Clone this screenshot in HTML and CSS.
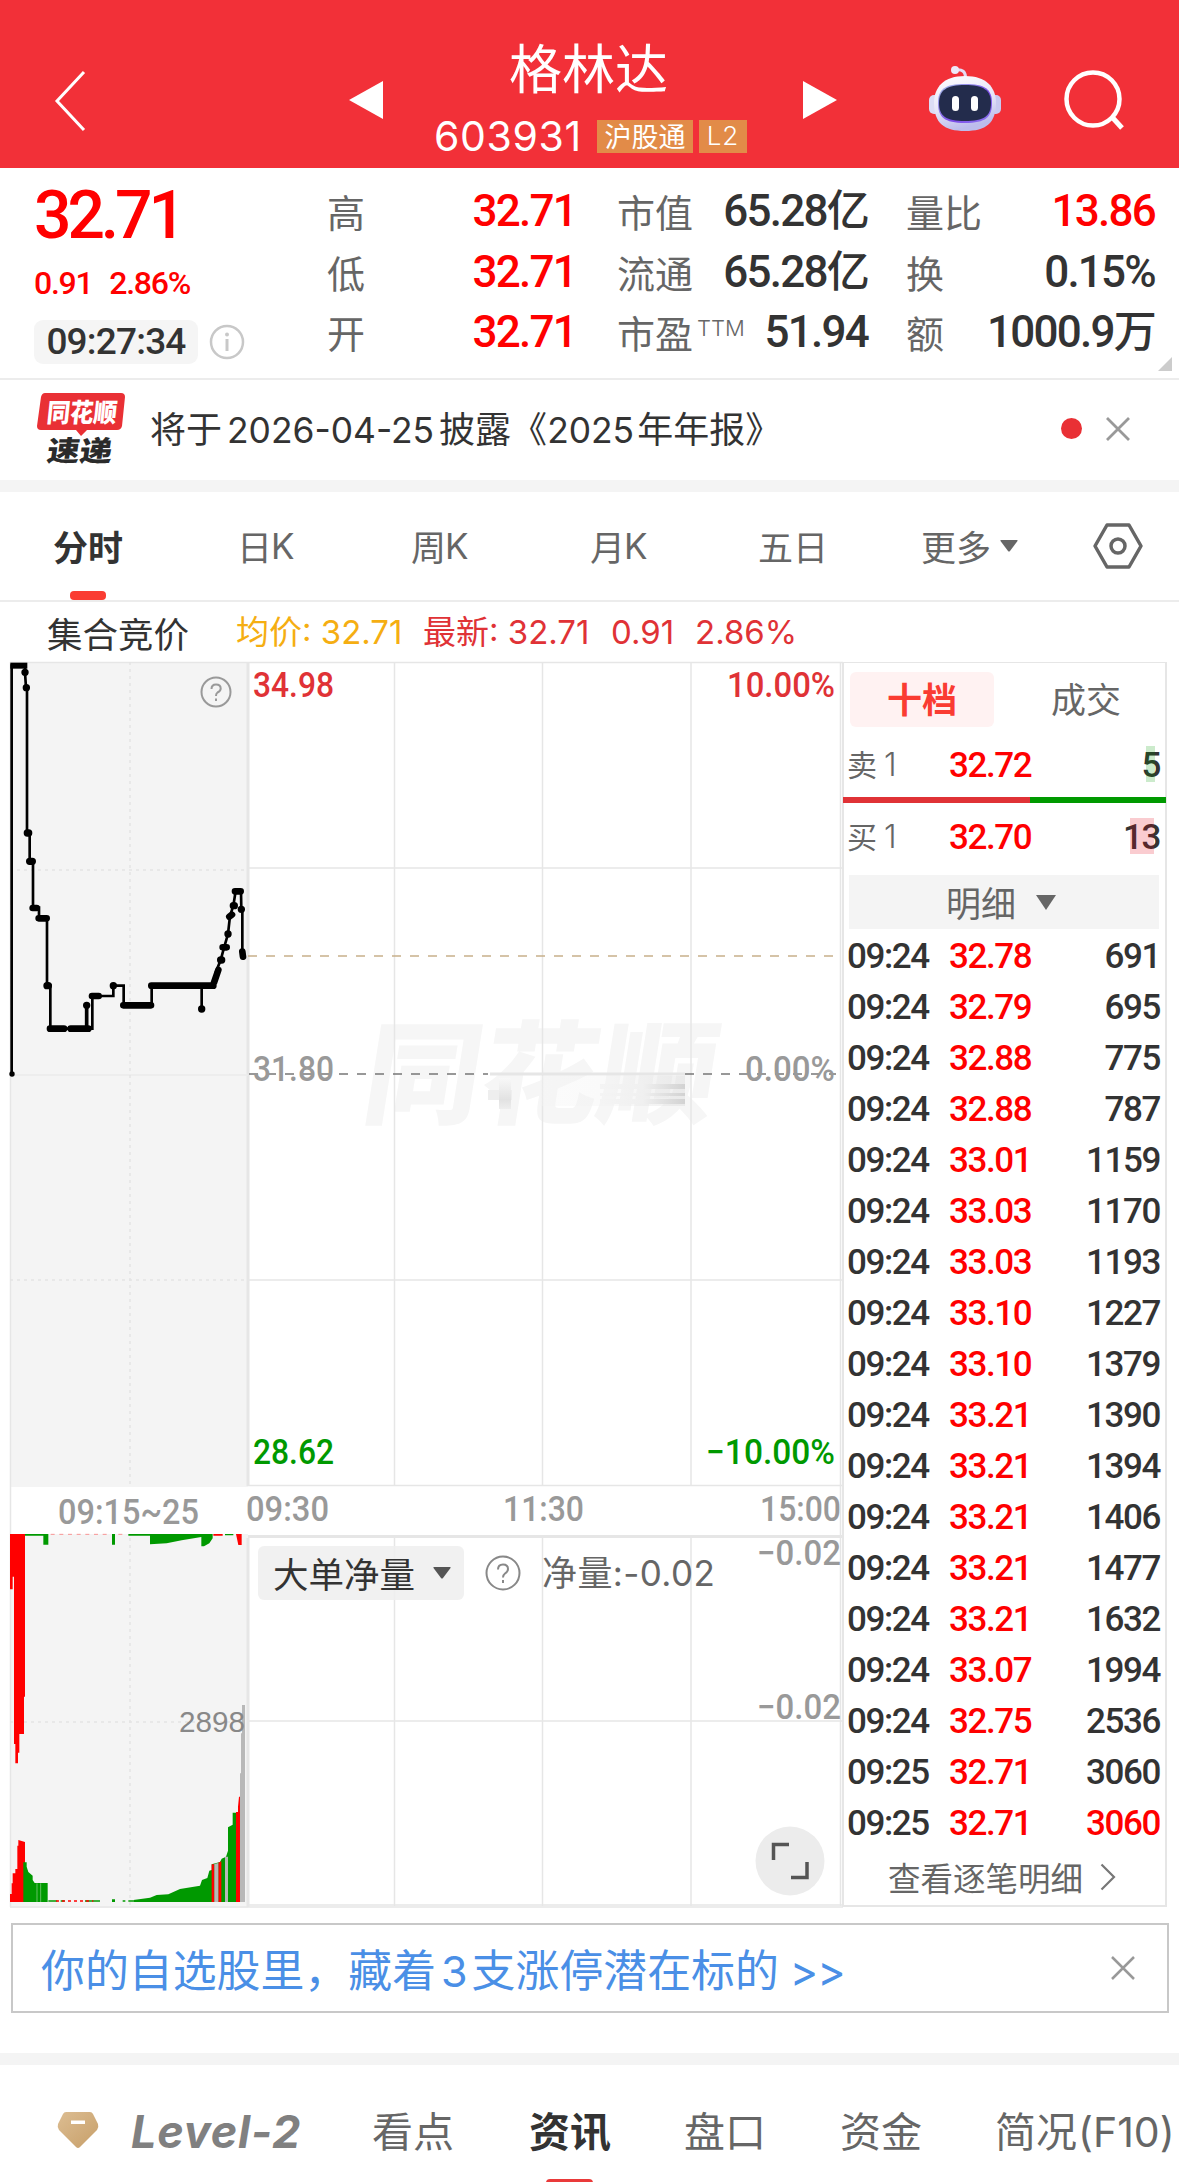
FILE: index.html
```html
<!DOCTYPE html>
<html lang="zh-CN">
<head>
    <meta charset="UTF-8">
    <meta name="viewport" content="width=device-width, initial-scale=1.0">
    <title>格林达 603931</title>
    <link rel="stylesheet" href="styles.css">
</head>
<body>
    <header class="header">
        <svg class="back" viewBox="0 0 32 60"><path d="M30 1 L3 30 L30 59" fill="none" stroke="#fff" stroke-width="3"/></svg>
        <svg class="prev" viewBox="0 0 34 38"><path d="M34 0 V38 L0 19z" fill="#fff"/></svg>
        <div class="stock">
            <h1>格林达</h1>
            <div class="code"><span class="code-num">603931</span><span class="badge">沪股通</span><span class="badge l2">L2</span></div>
        </div>
        <svg class="next" viewBox="0 0 34 38"><path d="M0 0 V38 L34 19z" fill="#fff"/></svg>
        <svg class="robot" viewBox="0 0 72 66">
            <defs>
                <linearGradient id="shell" x1="0" y1="0" x2="0.3" y2="1">
                    <stop offset="0" stop-color="#ffffff"/>
                    <stop offset="0.6" stop-color="#e6e4f8"/>
                    <stop offset="1" stop-color="#bcbcec"/>
                </linearGradient>
                <linearGradient id="rim" x1="0" y1="0" x2="1" y2="1">
                    <stop offset="0" stop-color="#a9c4e8"/>
                    <stop offset="0.6" stop-color="#7b4be8"/>
                    <stop offset="1" stop-color="#8f7cf0"/>
                </linearGradient>
            </defs>
            <path d="M26 4 Q37 2 36.500 13" fill="none" stroke="#e4dcf4" stroke-width="3"/>
            <circle cx="26" cy="4" r="4" fill="#eee9f8"/>
            <rect x="0" y="29" width="11" height="19" rx="5" fill="#dcdcf5"/>
            <rect x="61" y="29" width="11" height="19" rx="5" fill="#c9c9f0"/>
            <path d="M36 10 C57 10 67 21 67 37 C67 57 57 65 36 65 C15 65 5 57 5 37 C5 21 15 10 36 10z" fill="url(#shell)"/>
            <path d="M36 18 C56 18 63 23 63 37 C63 51 57 57 36 57 C15 57 9 51 9 37 C9 23 16 18 36 18z" fill="url(#rim)"/>
            <path d="M36 19 C54 19 62 24 62 37 C62 50 55 55 36 55 C17 55 10 50 10 37 C10 24 18 19 36 19z" fill="#232c4c"/>
            <rect x="23" y="30" width="7" height="15" rx="3.500" fill="#fff"/>
            <rect x="42" y="30" width="7" height="15" rx="3.500" fill="#fff"/>
        </svg>
        <svg class="search" viewBox="0 0 60 60"><circle cx="29" cy="29" r="26.500" fill="none" stroke="#fff" stroke-width="4.500"/><path d="M48 47 L58 58" stroke="#fff" stroke-width="5"/></svg>
    </header>

    <section class="quote">
        <div class="now">
            <div class="price num">32.71</div>
            <div class="change num"><span>0.91</span><span>2.86%</span></div>
            <div class="clock">
                <span class="time num">09:27:34</span>
                <svg class="info" viewBox="0 0 36 36"><circle cx="18" cy="18" r="16" fill="none" stroke="#c8c8c8" stroke-width="2.500"/><circle cx="18" cy="10.500" r="2" fill="#c8c8c8"/><path d="M18 15 V27" stroke="#c8c8c8" stroke-width="3"/></svg>
            </div>
        </div>
        <dl class="stats">
            <dt>高</dt><dd class="up num">32.71</dd>
            <dt>低</dt><dd class="up num">32.71</dd>
            <dt>开</dt><dd class="up num">32.71</dd>
        </dl>
        <dl class="stats">
            <dt>市值</dt><dd class="num">65.28<i>亿</i></dd>
            <dt>流通</dt><dd class="num">65.28<i>亿</i></dd>
            <dt>市盈<sup>TTM</sup></dt><dd class="num">51.94</dd>
        </dl>
        <dl class="stats">
            <dt>量比</dt><dd class="up num">13.86</dd>
            <dt>换</dt><dd class="num">0.15%</dd>
            <dt>额</dt><dd class="num">1000.9<i>万</i></dd>
        </dl>
        <svg class="corner" viewBox="0 0 14 14"><path d="M14 0 V14 H0z" fill="#ccc"/></svg>
    </section>

    <section class="news">
        <svg class="express" viewBox="0 0 90 72">
            <path d="M8 0 H84 Q88 0 88 4 L85 33 Q84 37 80 37 H50 L44 43 L39 37 H4 Q0 37 0 33 L4 4 Q5 0 8 0z" fill="#e93035"/>
            <text class="logo-text" transform="translate(9 29) skewX(-6)" font-size="26" textLength="70" lengthAdjust="spacingAndGlyphs" fill="#fff">同花顺</text>
            <text class="logo-text" transform="translate(9 68) skewX(-8)" font-size="28" textLength="65" lengthAdjust="spacingAndGlyphs" fill="#2b2b2b">速递</text>
        </svg>
        <p class="news-text">将于<b>2026-04-25</b>披露《<b class="yr">2025</b>年年报》</p>
        <span class="dot"></span>
        <svg class="close" viewBox="0 0 24 24"><path d="M1 1 L23 23 M23 1 L1 23" stroke="#999" stroke-width="2.800"/></svg>
    </section>

    <nav class="periods">
        <a class="active">分时</a>
        <a>日<span class="k">K</span></a>
        <a>周<span class="k">K</span></a>
        <a>月<span class="k">K</span></a>
        <a>五日</a>
        <a>更多<svg class="caret" viewBox="0 0 18 12"><path d="M1 0 H17 Q18 0 17.500 1 L10 11 Q9 12 8 11 L0.500 1 Q0 0 1 0z" fill="#666"/></svg></a>
        <svg class="gear" viewBox="0 0 50 46"><path d="M14 2 H36 L48 23 L36 44 H14 L2 23z" fill="none" stroke="#666" stroke-width="3.500" stroke-linejoin="round"/><circle cx="25" cy="23" r="7" fill="none" stroke="#666" stroke-width="3.500"/></svg>
    </nav>

    <div class="legend">
        <span class="phase">集合竞价</span>
        <span class="avg">均价: 32.71</span>
        <span class="last">最新: 32.71</span>
        <span class="last">0.91</span>
        <span class="last">2.86%</span>
    </div>

    <main class="board">
        <div class="charts">
            <svg class="chart" viewBox="0 662 843 1248">
                <!-- auction background -->
                <rect x="10" y="662" width="238" height="825" fill="#f4f4f4"/>
                <rect x="10" y="1534" width="238" height="374" fill="#f4f4f4"/>
                <text class="mark" transform="translate(359 1115) skewX(-9)" font-size="112" textLength="352" lengthAdjust="spacingAndGlyphs">同花顺</text>

                <!-- grid -->
                <g fill="none" stroke="#e6e6e6" stroke-width="1.500">
                    <path d="M10 662.500 H843 M248 868 H843 M248 1280 H843 M248 1485.500 H843 M248 1721 H843 M10 1907 H843 M248 1905 H843"/>
                    <path d="M394.500 662 V1485 M542.500 662 V1485 M691 662 V1485 M394.500 1538 V1906 M542.500 1538 V1906 M691 1538 V1906 M840.500 662 V1906 M10.500 662 V1907"/>
                    <path d="M248 662 V1486 M248 1538 V1907 M248 1536.500 H843" stroke-width="3"/>
                    <path d="M10 1075 H248" stroke="#ebebeb"/>
                    <path d="M130 662 V1486 M130 1538 V1906 M10 870 H248 M10 1280 H248 M10 1722 H248" stroke="#e4e4e4" stroke-dasharray="3 4"/>
                </g>
                <defs>
                    <linearGradient id="haze" x1="0" y1="0" x2="1" y2="0">
                        <stop offset="0" stop-color="#f4f4f4"/>
                        <stop offset="0.5" stop-color="#f0f0f0"/>
                        <stop offset="1" stop-color="#d2d2d2"/>
                    </linearGradient>
                    <linearGradient id="smudge" x1="0" y1="0" x2="0" y2="1">
                        <stop offset="0" stop-color="#f8f8f8"/>
                        <stop offset="0.7" stop-color="#e2e2e2"/>
                        <stop offset="1" stop-color="#eeeeee"/>
                    </linearGradient>
                </defs>
                <path d="M248 956 H836" stroke="#c8b08a" stroke-width="1.700" stroke-dasharray="9 9"/>
                <path d="M249 1074 H488 M685 1074 H836" stroke="#777" stroke-width="1.700" stroke-dasharray="9 9"/>
                <path d="M490 1074 H685" stroke="#e6e6e6" stroke-width="3"/>
                <rect x="540" y="1076" width="145" height="30" fill="url(#haze)" opacity="0.35"/>
                <rect x="600" y="1084" width="85" height="5" fill="url(#haze)"/>
                <rect x="600" y="1093" width="85" height="3" fill="url(#haze)"/>
                <rect x="600" y="1099" width="85" height="5" fill="url(#haze)"/>
                <rect x="488" y="1090" width="24" height="10" fill="#eeeeee"/>
                <rect x="499" y="1078" width="12" height="31" fill="url(#smudge)"/>

                <!-- auction price steps -->
                <g transform="translate(0 640) scale(0.33333)" fill="none" stroke="#000">
                    <path stroke-width="8" d="M35 1302 V77 H75 V97 L78 143 H81 V579 H89 V664 H99 V803 H117 V835 H141 V1037 H151 V1166 H277 V1068 H340 V1037 H371 V1096 H455 V1037 H640 L648 995 L662 960 L673 920 L684 882 L690 828 L700 797 L707 753 H723 L724 808 H727 V935 L729 950 M605 1037 V1107"/>
                    <path stroke-width="11" d="M260 1096 V1166"/>
                    <path stroke-width="18" d="M31 77 H82"/>
                    <path stroke-width="20" stroke-linecap="round" d="M98 804 H110 M116 835 H140 M150 1166 H192 M212 1166 H265 M276 1068 H296 M370 1096 H453 M454 1037 H640 M642 1028 L655 990 M668 922 H680 M688 830 L696 824 M705 754 H722 M727 935 L729 950"/>
                    <path stroke-width="22" stroke-linecap="round" d="M75 97h.1 M79 143h.1 M82 579h4 M89 664h8 M141 1037h4 M260 1096h.1 M340 1037h.1 M605 1107h.1 M662 960h3 M684 882h.1 M700 797h3 M724 808h.1"/>
                    <path stroke-width="16" stroke-linecap="round" d="M36 1302h.1"/>
                </g>

                <!-- unmatched / matched volume -->
                <g transform="translate(0 1460) scale(0.33333)">
                    <path fill="#ff0000" d="M30 222 H75 V710 H72 V822 H58 V878 H54 V910 H46 V852 H42 V350 H38 V388 H30z M640 222 H668 V227 H640z M708 222 H725 V255 H715z"/>
                    <path fill="#009900" d="M75 222 H145 V254 H130 V227 H75z M336 222 H345 V254 H336z M385 222 H450 V227 H385z M450 222 H638 V235 L628 250 L612 259 H604 V231 L545 241 L500 250 L450 253z M675 222 H700 V226 H675z"/>
                    <path fill="none" stroke="#ff0000" stroke-width="2" stroke-dasharray="12 14" opacity="0.6" d="M152 223 H330 M355 223 H380"/>
                    <path fill="#ff0000" d="M30 1326 V1302 H35 V1270 H38 V1240 H46 V1227 H52 V1157 H55 V1140 L75 1146 V1326z"/>
                    <path fill="#009900" d="M70 1326 V1207 H80 V1220 L85 1236 L98 1247 V1260 L104 1269 H143 V1326z"/>
                    <path fill="none" stroke="#c9e6c4" stroke-width="1.500" d="M111 1270 V1326 M122 1270 V1326"/>
                    <path fill="none" stroke="#009900" stroke-width="5" d="M145 1323 H172 M182 1323 H194 M255 1323 H300 M368 1323 H376 M385 1323 H400"/>
                    <path fill="none" stroke="#ff0000" stroke-width="5" stroke-dasharray="9 9" d="M168 1323 H280"/>
                    <path fill="#009900" d="M336 1318 H345 V1326 H336z M400 1326 V1320 L450 1313 L470 1305 L505 1303 L540 1287 L600 1277 L606 1260 L622 1254 L628 1232 L635 1230 V1213 L660 1206 L665 1196 L678 1190 L684 1172 V1102 L698 1094 V1058 H708 V1326z"/>
                    <path fill="#ff0000" d="M635 1326 V1213 H643 V1326z M655 1326 V1208 L664 1204 V1326z M708 1326 V1056 H714 V1040 L717 1010 H721 V1326z"/>
                    <path fill="#b8b8b8" d="M643 1326 V1212 L655 1209 V1326z M675 1326 V1190 H684 V1326z M720 1326 V940 H723 V820 H726 V735 H735 V1326z"/>
                </g>
                <text x="179" y="1732" class="vol" textLength="66" lengthAdjust="spacingAndGlyphs">2898</text>

                <g class="axis">
                    <text x="253" y="697" textLength="81" lengthAdjust="spacingAndGlyphs" fill="#e03236">34.98</text>
                    <text x="727" y="697" textLength="108" lengthAdjust="spacingAndGlyphs" fill="#e03236">10.00%</text>
                    <text x="253" y="1081" textLength="81" lengthAdjust="spacingAndGlyphs">31.80</text>
                    <text x="745" y="1081" textLength="90" lengthAdjust="spacingAndGlyphs">0.00%</text>
                    <text x="253" y="1464" textLength="81" lengthAdjust="spacingAndGlyphs" fill="#009900">28.62</text>
                    <text x="706" y="1464" textLength="129" lengthAdjust="spacingAndGlyphs" fill="#009900">−10.00%</text>
                    <text x="58" y="1524" textLength="141" lengthAdjust="spacingAndGlyphs">09:15~25</text>
                    <text x="246" y="1521" textLength="83" lengthAdjust="spacingAndGlyphs">09:30</text>
                    <text x="503" y="1521" textLength="81" lengthAdjust="spacingAndGlyphs">11:30</text>
                    <text x="760" y="1521" textLength="81" lengthAdjust="spacingAndGlyphs">15:00</text>
                    <text x="757" y="1565" textLength="84" lengthAdjust="spacingAndGlyphs">−0.02</text>
                    <text x="757" y="1719" textLength="84" lengthAdjust="spacingAndGlyphs">−0.02</text>
                </g>
                <g fill="none" stroke="#999" stroke-width="2">
                    <circle cx="216" cy="692" r="14.500"/>
                    <path d="M211.500 689 Q211.500 684.500 216 684.500 Q220.700 684.500 220.700 688.500 Q220.700 691 217.500 692.500 Q216 693.500 216 696 M216 698.500 V701"/>
                </g>
            </svg>
            <div class="indicator">
                <span class="picker">大单净量<svg class="caret" viewBox="0 0 18 12"><path d="M1 0 H17 Q18 0 17.500 1 L10 11 Q9 12 8 11 L0.500 1 Q0 0 1 0z" fill="#555"/></svg></span>
                <svg class="help" viewBox="0 0 36 36"><g fill="none" stroke="#888" stroke-width="2"><circle cx="18" cy="18" r="16.500"/><path d="M13 14.500 Q13 9.500 18 9.500 Q23 9.500 23 14 Q23 16.500 20 18.500 Q18 20 18 22.500 M18 25 V28"/></g></svg>
                <span class="net">净量:-0.02</span>
            </div>
            <svg class="expand" viewBox="0 0 70 70"><circle cx="35" cy="35" r="34.500" fill="#ececec"/><path d="M18.500 34 V18.500 H34 M52 36 V51.500 H36" fill="none" stroke="#555" stroke-width="3.500"/></svg>
        </div>

        <aside class="depth">
            <div class="depth-tabs"><span class="on">十档</span><span>成交</span></div>
            <div class="level num"><span class="side">卖<em>1</em></span><span class="up">32.72</span><span class="qty sell">5</span></div>
            <div class="ratio"><span class="buy-part"></span><span class="sell-part"></span></div>
            <div class="level num"><span class="side">买<em>1</em></span><span class="up">32.70</span><span class="qty buy">13</span></div>
            <div class="detail-head">明细<svg viewBox="0 0 20 15"><path d="M0 0 H20 L10 15z" fill="#666"/></svg></div>
            <div class="tick num"><span>09:24</span><span class="up">32.78</span><span>691</span></div>
            <div class="tick num"><span>09:24</span><span class="up">32.79</span><span>695</span></div>
            <div class="tick num"><span>09:24</span><span class="up">32.88</span><span>775</span></div>
            <div class="tick num"><span>09:24</span><span class="up">32.88</span><span>787</span></div>
            <div class="tick num"><span>09:24</span><span class="up">33.01</span><span>1159</span></div>
            <div class="tick num"><span>09:24</span><span class="up">33.03</span><span>1170</span></div>
            <div class="tick num"><span>09:24</span><span class="up">33.03</span><span>1193</span></div>
            <div class="tick num"><span>09:24</span><span class="up">33.10</span><span>1227</span></div>
            <div class="tick num"><span>09:24</span><span class="up">33.10</span><span>1379</span></div>
            <div class="tick num"><span>09:24</span><span class="up">33.21</span><span>1390</span></div>
            <div class="tick num"><span>09:24</span><span class="up">33.21</span><span>1394</span></div>
            <div class="tick num"><span>09:24</span><span class="up">33.21</span><span>1406</span></div>
            <div class="tick num"><span>09:24</span><span class="up">33.21</span><span>1477</span></div>
            <div class="tick num"><span>09:24</span><span class="up">33.21</span><span>1632</span></div>
            <div class="tick num"><span>09:24</span><span class="up">33.07</span><span>1994</span></div>
            <div class="tick num"><span>09:24</span><span class="up">32.75</span><span>2536</span></div>
            <div class="tick num"><span>09:25</span><span class="up">32.71</span><span>3060</span></div>
            <div class="tick num"><span>09:25</span><span class="up">32.71</span><span class="up">3060</span></div>
            <div class="more">查看逐笔明细<svg viewBox="0 0 16 28"><path d="M1.500 1.500 L14 14 L1.500 26.500" fill="none" stroke="#777" stroke-width="2.200"/></svg></div>
        </aside>
    </main>

    <div class="promo">
        <span class="promo-text">你的自选股里，藏着<b>3</b>支涨停潜在标的<b class="gt">&gt;&gt;</b></span>
        <svg class="close" viewBox="0 0 24 24"><path d="M1 1 L23 23 M23 1 L1 23" stroke="#999" stroke-width="2.500"/></svg>
    </div>

    <nav class="sections">
        <svg class="gem" viewBox="0 0 42 36"><defs><linearGradient id="gold" x1="0" y1="0" x2="1" y2="1"><stop offset="0" stop-color="#dcbd92"/><stop offset="1" stop-color="#c79f69"/></linearGradient></defs><path d="M9 0 H33 Q35 0 36 2 L41 12 Q42 15 40 18 L23 35 Q21 37 19 35 L2 18 Q0 15 1 12 L6 2 Q7 0 9 0z" fill="url(#gold)"/><rect x="14" y="8.500" width="14" height="3.500" fill="#fff"/></svg>
        <a class="level2">Level-2</a>
        <a>看点</a>
        <a class="active">资讯</a>
        <a>盘口</a>
        <a>资金</a>
        <a>简况<span class="f10">(F10)</span></a>
    </nav>
</body>
</html>
```
FILE: styles.css
```css
* { box-sizing: border-box; }

body {
    margin: 0;
    width: 1179px;
    height: 2182px;
    overflow: hidden;
    background: #fff;
    color: #333;
    font-family: Inter, "Noto Sans CJK SC", sans-serif;
}

svg { display: block; flex: none; overflow: visible; }
h1, p, dl, dd { margin: 0; }
i, em { font-style: normal; }
b { font-weight: 400; }

.num {
    font-family: Roboto, "Noto Sans CJK SC", sans-serif;
    font-weight: 460;
    letter-spacing: -0.04em;
}

.up { color: #ff0000; }

/* header */
.header {
    display: flex;
    height: 168px;
    background: #f23038;
    color: #fff;
}
.back { width: 32px; height: 60px; margin: 71px 0 0 54px; }
.prev { width: 34px; height: 38px; margin: 81px 0 0 263px; }
.next { width: 34px; height: 38px; margin-top: 81px; }
.stock { width: 420px; padding: 36px 0 0 53px; }
.stock h1 {
    width: 160px;
    margin-left: 73px;
    font: 400 53px/60px "Noto Sans CJK SC", sans-serif;
    white-space: nowrap;
}
.code { display: flex; align-items: center; height: 33px; margin-top: 24px; }
.code-num { width: 163px; margin-left: -2px; padding-bottom: 2px; font-size: 41px; line-height: 48px; letter-spacing: 0.015em; font-weight: 380; }
.badge {
    width: 96px;
    height: 33px;
    background: #e28b48;
    font: 400 27px/32px "Noto Sans CJK SC", sans-serif;
    text-align: center;
    white-space: nowrap;
}
.l2 { width: 48px; margin-left: 6px; font-family: Inter, sans-serif; font-weight: 350; font-size: 26px; letter-spacing: 1px; }
.robot { width: 72px; height: 66px; margin: 66px 0 0 92px; }
.search { width: 60px; height: 60px; margin: 70px 0 0 63px; }

/* quote */
.quote {
    position: relative;
    display: grid;
    grid-template-columns: 293px 249px 292px 251px;
    height: 212px;
    padding-left: 34px;
    border-bottom: 2px solid #ececec;
}
.price { padding-top: 18px; font-size: 66px; line-height: 60px; color: #ff0000; letter-spacing: -0.062em; }
.change { display: flex; gap: 17px; margin-top: 18px; font-size: 32px; line-height: 38px; color: #ff0000; }
.clock { display: flex; align-items: center; gap: 11px; margin-top: 18px; }
.time { width: 164px; height: 44px; border-radius: 9px; background: #f5f5f5; font-size: 37px; line-height: 44px; letter-spacing: -0.022em; text-align: center; white-space: nowrap; }
.info { width: 36px; height: 36px; }
/* labels overflow their zero-width column so values keep one right edge */
.stats {
    display: grid;
    grid-template-columns: 0 1fr;
    grid-auto-rows: 60.5px;
    padding-top: 12px;
}
.stats:nth-child(3) { margin-left: 41px; }
.stats:nth-child(4) { margin-left: 38px; margin-right: -36px; }
.stats dt { font: 400 38px/62px "Noto Sans CJK SC", sans-serif; color: #666; white-space: nowrap; }
.stats sup { position: relative; top: 0; margin-left: 4px; vertical-align: top; font: 350 22px/54px Inter, sans-serif; }
.stats dd { font-size: 44px; line-height: 63px; text-align: right; white-space: nowrap; }
.stats i { font-size: 43px; }
.corner { position: absolute; right: 7px; bottom: 7px; width: 14px; height: 14px; }

/* news */
.news { display: flex; align-items: center; height: 112px; padding: 0 49px 3px 37px; border-bottom: 12px solid #f4f4f4; }
.express { width: 90px; height: 72px; }
.logo-text { font-family: "Noto Sans CJK SC", sans-serif; font-weight: 900; }
.news-text { flex: 1; margin-left: 23px; font: 400 36px/50px "Noto Sans CJK SC", sans-serif; white-space: nowrap; }
.news-text b { margin: 0 5px 0 5px; font: 400 35.400px/50px Inter, sans-serif; }
.news-text .yr { margin: 0 3px 0 0; }
.dot { width: 21px; height: 21px; margin-right: 24px; border-radius: 50%; background: #e93035; }
.close { width: 24px; height: 24px; }

/* period tabs */
.periods {
    display: grid;
    grid-template-columns: 184px 174px 179px 168px 163px 172px 50px;
    align-items: center;
    height: 110px;
    padding-left: 53px;
    border-bottom: 2px solid #ececec;
    color: #666;
    font: 400 35px/104px "Noto Sans CJK SC", sans-serif;
}
.periods a { display: flex; align-items: center; position: relative; height: 106px; }
.periods .k { font: 400 35px/104px Inter, sans-serif; margin-left: -1px; }
.periods .active { color: #333; font-weight: 700; }
.periods .active::after {
    content: "";
    position: absolute;
    left: 17px;
    bottom: -1px;
    width: 36px;
    height: 9px;
    border-radius: 4px;
    background: #fa3c32;
}
.caret { width: 18px; height: 12px; margin-left: 9px; }
.gear { width: 50px; height: 46px; }

/* legend */
.legend {
    display: grid;
    grid-template-columns: 189px 187px 188px 84px auto;
    height: 60px;
    padding-left: 47px;
    font-size: 33px;
    line-height: 60px;
    white-space: nowrap;
}
.phase { font: 400 35.500px/62px "Noto Sans CJK SC", sans-serif; }
.avg { color: #f5ae12; }
.last { color: #e03236; }

/* board */
.board { display: flex; height: 1248px; }
.charts { position: relative; width: 843px; }
.chart { width: 843px; height: 1248px; }
.axis { font: 460 35px Roboto, sans-serif; fill: #999; }
.vol { font: 29px "Liberation Sans", sans-serif; fill: #888; }
.mark { font-family: "Noto Sans CJK SC", sans-serif; font-weight: 900; fill: #f6f6f6; }
.indicator { position: absolute; left: 258px; top: 884px; display: flex; align-items: center; height: 54px; }
.picker {
    display: flex;
    align-items: center;
    width: 206px;
    height: 54px;
    padding-left: 15px;
    border-radius: 6px;
    background: rgba(238, 238, 238, 0.85);
    font: 400 35.500px/52px "Noto Sans CJK SC", sans-serif;
    white-space: nowrap;
}
.picker .caret { margin-left: 18px; }
.help { width: 36px; height: 36px; margin: 0 21px 0 21px; }
.net { color: #666; font-size: 35px; line-height: 50px; padding-bottom: 1px; letter-spacing: 0.4px; white-space: nowrap; }
.expand { position: absolute; left: 755px; top: 1164px; width: 70px; height: 70px; }

.depth {
    width: 325px;
    height: 1245px;
    margin-left: -1px;
    border: 2px solid #e6e6e6;
    border-top-width: 1px;
    font-size: 35px;
}
.depth-tabs { display: flex; padding: 9px 6px 0; }
.depth-tabs span { width: 144px; height: 55px; border-radius: 6px; font: 400 35px/51px "Noto Sans CJK SC", sans-serif; text-align: center; color: #666; }
.depth-tabs span + span { margin-left: 20px; }
.depth-tabs .on { background: #fff2f2; color: #fa3c32; font-weight: 700; }
.level, .tick { display: grid; grid-template-columns: 102px 100px 1fr; padding: 0 5px 0 3px; line-height: 53px; }
.level { height: 51px; }
.level:nth-child(2) { margin-top: 12px; }
.level:nth-child(4) { margin-top: 8px; }
.tick { height: 51px; }
.tick span:last-child, .qty { text-align: right; }
.level .side { font: 400 30px/49px "Noto Sans CJK SC", sans-serif; color: #666; letter-spacing: 0; }
.side em { margin-left: 7px; font: 350 32px Inter, sans-serif; }
.qty { position: relative; }
.qty::before { content: ""; position: absolute; top: 7px; right: 5px; width: 9px; height: 36px; background: #009900; opacity: 0.2; }
.qty.buy::before { right: 6px; width: 24px; background: #e60012; }
.ratio { display: flex; height: 6px; margin: 7px -1px 0 -1px; }
.buy-part { width: 187px; background: #e03236; }
.sell-part { flex: 1; background: #009900; }
.detail-head {
    display: flex;
    align-items: center;
    justify-content: center;
    gap: 20px;
    height: 54px;
    margin: 13px 6px 1px 5px;
    padding-right: 6px;
    background: #f4f4f4;
    color: #666;
    font: 400 35px/50px "Noto Sans CJK SC", sans-serif;
}
.detail-head svg { width: 20px; height: 15px; }
.more { display: flex; align-items: center; gap: 17px; height: 57px; padding-left: 44px; color: #666; font: 400 32.500px/57px "Noto Sans CJK SC", sans-serif; }
.more svg { width: 16px; height: 28px; }

/* promo */
.promo {
    display: flex;
    align-items: center;
    justify-content: space-between;
    height: 90px;
    margin: 13px 10px 40px 11px;
    padding: 0 32px 0 28px;
    border: 2px solid #c8c8c8;
    color: #4a8fe6;
}
.promo-text { font: 400 43.900px/80px "Noto Sans CJK SC", sans-serif; white-space: nowrap; }
.promo-text b { margin: 0 4px 0 5px; font: 400 43px Inter, sans-serif; }
.promo-text .gt { margin: 0 0 0 11px; letter-spacing: -1px; }

/* bottom tabs */
.sections {
    display: grid;
    grid-template-columns: 74px 241px 157px 155px 156px 155px 183px;
    align-items: center;
    height: 129px;
    padding-left: 57px;
    border-top: 12px solid #f4f4f4;
    color: #666;
    font: 400 41px/117px "Noto Sans CJK SC", sans-serif;
}
.sections a { position: relative; height: 117px; line-height: 129px; white-space: nowrap; }
.gem { width: 42px; height: 36px; margin-top: 13px; }
.sections .level2 { font-family: Inter, sans-serif; font-weight: 700; font-style: italic; color: #808080; letter-spacing: 0.8px; font-size: 45px; line-height: 133px; }
.sections .active { color: #333; font-weight: 700; }
.sections .active::after {
    content: "";
    position: absolute;
    left: 17px;
    bottom: -6px;
    width: 47px;
    height: 9px;
    border-radius: 4px;
    background: #ea3a3a;
}
.f10 { margin-left: 1px; font: 380 41px Inter, sans-serif; }
```
